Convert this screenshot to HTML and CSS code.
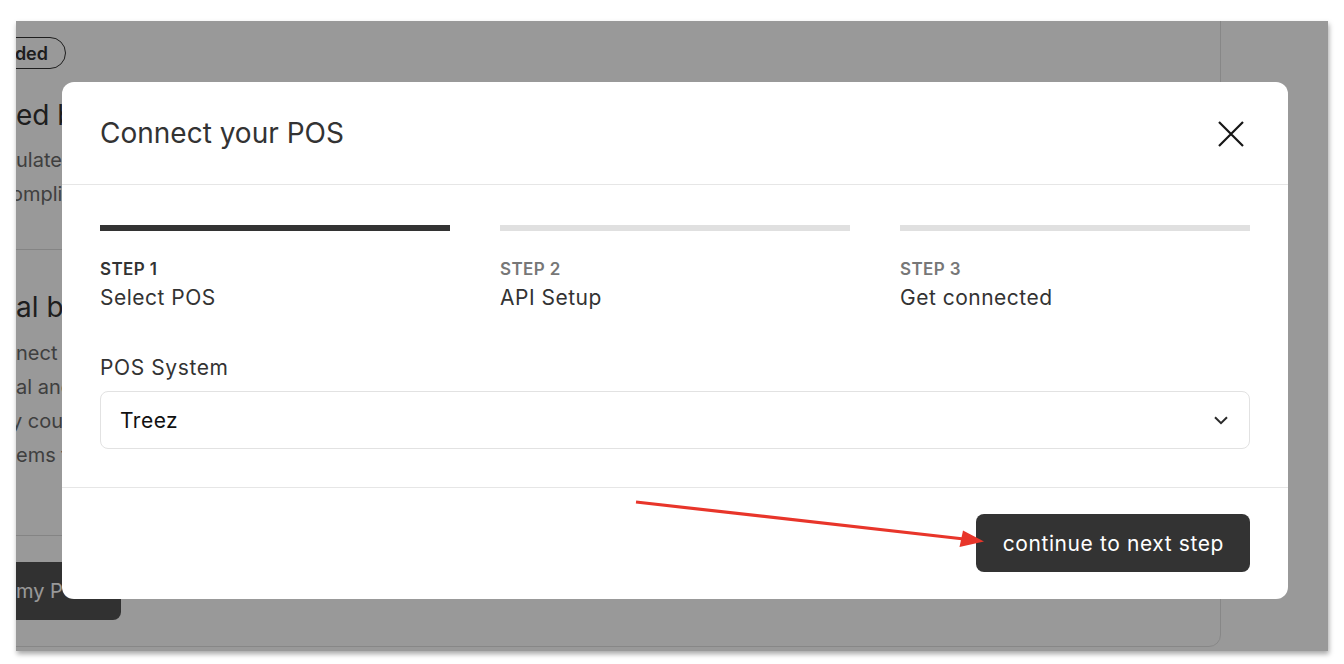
FILE: index.html
```html
<!DOCTYPE html>
<html lang="en">
<head>
<meta charset="utf-8">
<title>Connect your POS</title>
<link rel="stylesheet" href="styles.css">
</head>
<body>
<div class="screen">
  <div class="frame">
    <div class="page">
      <div class="card">
        <div class="pill"><span>Recommended</span></div>
        <h2 class="bg-title first">ed by POS</h2>
        <p class="bg-text">ulated automatically</p>
        <p class="bg-text cut">ompliance reports</p>
        <div class="bg-rule"></div>
        <h2 class="bg-title">al bookkeeping</h2>
        <p class="bg-text first-line">nect your POS</p>
        <p class="bg-text">al and state taxes</p>
        <p class="bg-text cut">y counts</p>
        <p class="bg-text">ems from POS</p>
        <div class="bg-rule lower"></div>
        <div class="bg-button">my POS</div>
      </div>
    </div>
    <div class="overlay">
      <div class="modal" role="dialog" aria-labelledby="modal-title">
        <div class="modal-head">
          <h1 id="modal-title" class="modal-title">Connect your POS</h1>
          <button class="close" aria-label="Close">
            <svg width="26" height="26" viewBox="0 0 26 26"><path d="M1 1 L25 25 M25 1 L1 25" stroke="#161616" stroke-width="2.2" fill="none"/></svg>
          </button>
        </div>
        <div class="modal-body">
          <div class="steps">
            <div class="step active">
              <div class="bar"></div>
              <div class="step-num">STEP 1</div>
              <div class="step-name">Select POS</div>
            </div>
            <div class="step">
              <div class="bar"></div>
              <div class="step-num">STEP 2</div>
              <div class="step-name">API Setup</div>
            </div>
            <div class="step">
              <div class="bar"></div>
              <div class="step-num">STEP 3</div>
              <div class="step-name">Get connected</div>
            </div>
          </div>
          <label class="field-label">POS System</label>
          <div class="select">
            <span>Treez</span>
            <svg width="14" height="9" viewBox="0 0 14 9"><path d="M1 1.2 L7 7.2 L13 1.2" stroke="#2a2a2a" stroke-width="2" fill="none"/></svg>
          </div>
        </div>
        <div class="modal-foot">
          <button class="primary">continue to next step</button>
        </div>
      </div>
    </div>
  </div>
  <svg class="arrow" width="1344" height="664" viewBox="0 0 1344 664">
    <line x1="636" y1="502" x2="964" y2="539" stroke="#e8352a" stroke-width="3.2"/>
    <polygon points="984,541.5 963,530.5 959.5,547" fill="#e8352a"/>
  </svg>
</div>
</body>
</html>
```
FILE: styles.css
```css
* { box-sizing: border-box; }
html, body { margin: 0; padding: 0; background: #fff; }
body {
  font-family: "Inter", "Noto Sans", sans-serif;
  width: 1344px;
  height: 664px;
  overflow: hidden;
}
.screen {
  position: relative;
  width: 1344px;
  height: 664px;
  padding: 21px 0 0 16px;
}
.frame {
  position: relative;
  width: 1312px;
  height: 630px;
  overflow: hidden;
  box-shadow: 1px 3px 5px rgba(0, 0, 0, 0.35);
}
.page {
  height: 100%;
  background: #fff;
}
.card {
  width: 1245px;
  height: 646px;
  margin: -20px 0 0 -40px;
  border: 1px solid #e2e2e2;
  border-radius: 12px;
  background: #fff;
  padding: 35px 0 0 39px;
  color: #333;
}
.pill {
  width: 170px;
  height: 32px;
  margin-left: -120px;
  border: 1px solid #333;
  border-radius: 16px;
  display: flex;
  align-items: center;
  justify-content: flex-end;
  padding-right: 17px;
  font-size: 18px;
  font-weight: 600;
  color: #333;
  white-space: nowrap;
}
.bg-title {
  margin: 0;
  font-size: 28px;
  line-height: 36px;
  font-weight: 400;
  color: #333;
  white-space: nowrap;
}
.bg-title.first { margin-top: 28px; }
.bg-text {
  margin: 0;
  font-size: 20px;
  line-height: 34px;
  color: #6a6a6a;
  white-space: nowrap;
}
.bg-title.first + .bg-text { margin-top: 10px; }
.bg-text.cut { margin-left: -5px; }
.bg-rule {
  height: 1px;
  background: #ddd;
  margin: 38px 0 0 -40px;
  width: 400px;
}
.bg-title:not(.first) { margin-top: 39px; }
.bg-text.first-line { margin-top: 11px; }
.bg-rule.lower { margin-top: 63px; }
.bg-button {
  margin: 26px 0 0 -60px;
  width: 165px;
  height: 58px;
  border-radius: 8px;
  background: #535353;
  color: #fff;
  font-size: 20px;
  display: flex;
  align-items: center;
  padding-left: 60px;
}
.overlay {
  position: absolute;
  inset: 0;
  background: rgba(0, 0, 0, 0.4);
  padding: 61px 0 0 46px;
}
.modal {
  width: 1226px;
  background: #fff;
  border-radius: 12px;
  color: #333;
}
.modal-head {
  height: 103px;
  display: flex;
  align-items: center;
  justify-content: space-between;
  padding: 0 44px 0 38px;
  border-bottom: 1px solid #e6e6e6;
}
.modal-title {
  margin: 0;
  font-size: 28px;
  font-weight: 400;
  color: #333;
}
.close {
  border: 0;
  background: none;
  padding: 0;
  width: 26px;
  height: 26px;
  display: flex;
  margin-top: 1px;
}
.modal-body {
  padding: 40px 38px 38px;
}
.steps {
  display: grid;
  grid-template-columns: repeat(3, 1fr);
  gap: 50px;
}
.bar {
  height: 6px;
  background: #e0e0e0;
}
.step.active .bar { background: #333; }
.step-num {
  margin-top: 26px;
  font-size: 17px;
  line-height: 24px;
  font-weight: 600;
  letter-spacing: 0.4px;
  color: #777;
}
.step.active .step-num { color: #333; }
.step-name {
  margin-top: 3px;
  font-size: 21px;
  line-height: 28px;
  letter-spacing: 0.5px;
  color: #333;
}
.field-label {
  display: block;
  margin-top: 42px;
  font-size: 21px;
  line-height: 28px;
  letter-spacing: 0.6px;
  color: #333;
}
.select {
  margin-top: 9px;
  height: 58px;
  border: 1px solid #e2e2e2;
  border-radius: 8px;
  display: flex;
  align-items: center;
  justify-content: space-between;
  padding: 0 21px 0 19px;
  font-size: 21px;
  letter-spacing: 0.5px;
  color: #111;
}
.modal-foot {
  border-top: 1px solid #e6e6e6;
  padding: 26px 38px 27px;
  display: flex;
  justify-content: flex-end;
}
.primary {
  height: 58px;
  border: 0;
  border-radius: 8px;
  background: #333;
  color: #fff;
  font-family: inherit;
  font-size: 21px;
  letter-spacing: 0.6px;
  padding: 0 26px 0 27px;
}
.arrow {
  position: absolute;
  left: 0;
  top: 0;
  pointer-events: none;
}
```
